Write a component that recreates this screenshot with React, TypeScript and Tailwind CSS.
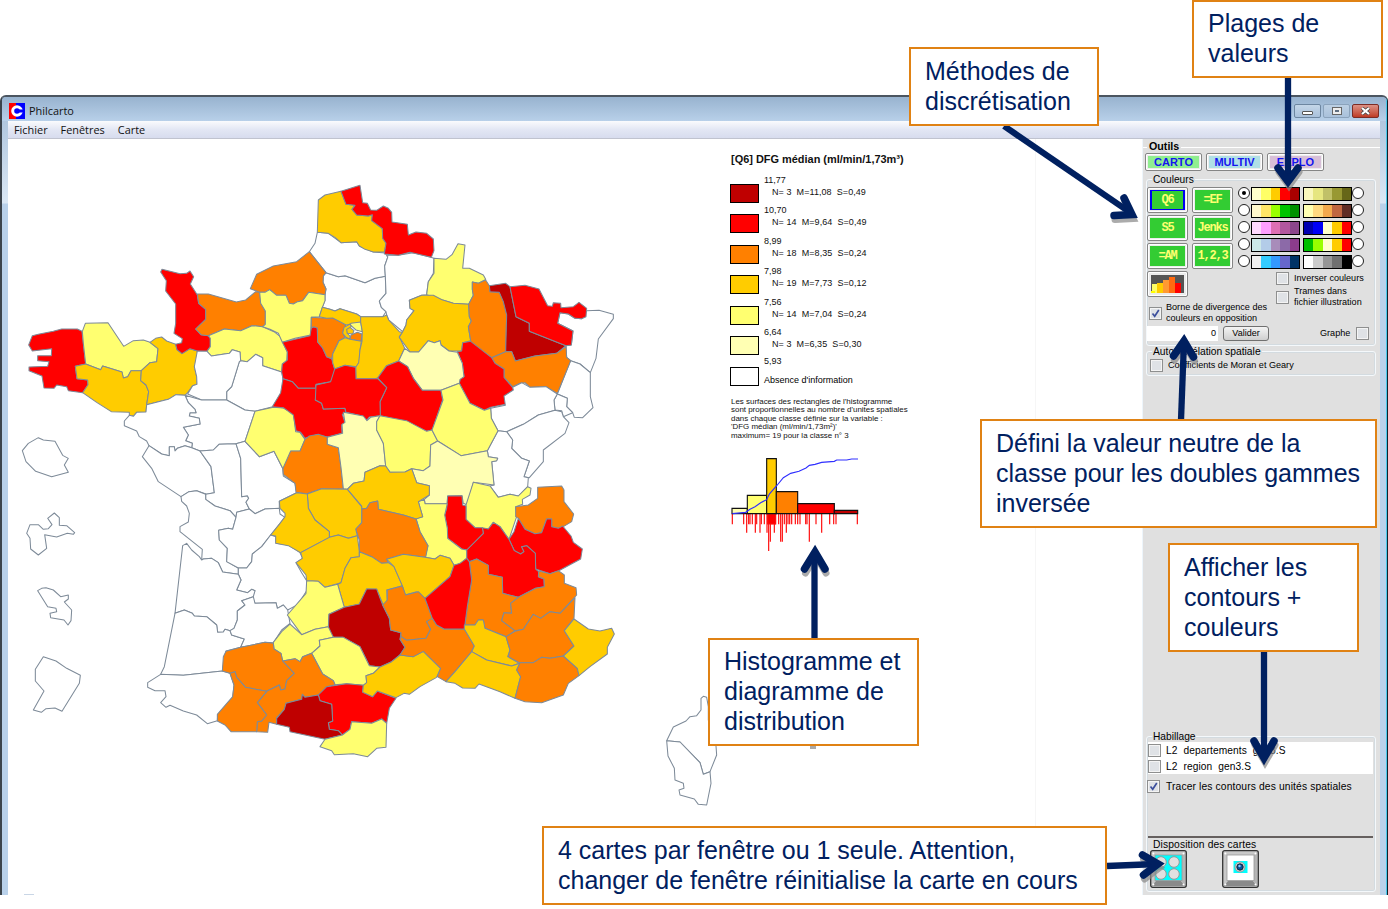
import React from "react";

type Region = [string, string];

const R = "#ff0000";
const K = "#bf0000";
const O = "#ff8000";
const G = "#ffcc00";
const Y = "#ffff70";
const P = "#ffffb3";
const W = "#ffffff";

const northWest: Region[] = [
  [R, "97,737 115,733 160,724 185,717 232,717 246,724 250,760 257,822 226,829 231,866 263,870 264,884 248,908 205,902 200,890 170,885 162,895 132,894 126,858 87,842 87,831 143,829 147,815 113,812 113,797 154,797 155,776 97,783 86,765"],
  [Y, "256,700 324,698 371,769 400,752 430,750 450,757 474,776 470,815 450,818 424,842 393,842 383,860 370,864 366,846 308,828 302,839 257,822 250,760 247,724"],
  [G, "226,829 257,822 302,839 308,828 366,846 370,864 383,860 393,842 424,842 422,872 438,885 446,905 440,944 438,966 410,967 400,979 388,976 388,967 334,965 290,937 248,908 264,884 263,870 231,866"],
  [G, "450,757 467,745 485,741 500,753 527,763 531,779 546,791 570,776 592,783 590,820 583,830 590,860 591,883 578,887 563,908 555,916 528,914 505,928 440,944 446,905 438,885 422,872 424,842 450,818 470,815 474,776"],
  [R, "482,546 486,538 540,551 560,550 570,543 581,560 571,582 592,615 596,640 617,658 617,688 587,717 603,734 625,737 631,745 631,770 621,784 592,783 570,776 546,791 531,779 527,763 545,758 547,746 522,730 527,700 527,642 497,603 499,572"],
  [O, "592,612 625,612 709,636 737,630 767,605 779,606 783,640 796,663 796,703 788,710 756,707 722,722 673,717 625,737 603,734 587,717 617,688 617,658 596,640"],
  [Y, "625,737 673,717 722,722 756,707 788,710 822,725 841,740 850,760 862,787 860,814 847,822 845,846 788,827 788,803 767,793 742,815 722,812 720,786 697,779 688,790 634,798 621,784 631,770 631,745"],
  [W, "722,812 742,815 767,793 788,803 788,827 845,846 849,866 847,905 818,950 765,964 735,960 680,930 680,905 695,890 718,815"],
  [W, "592,783 621,784 634,798 688,790 697,779 720,786 722,812 718,815 695,890 680,905 680,930 605,930 563,912 578,887 591,883 590,860 583,830"],
];

const northEast: Region[] = [
  [W, "258,308 295,320 315,317 375,338 405,325 436,319 438,370 418,393 424,412 438,425 428,440 362,440 350,432 300,416 285,423 270,418 247,412 255,392 255,374 258,357 249,337 250,318"],
  [W, "232,187 265,190 303,218 350,215 358,228 400,246 436,249 443,262 434,288 436,319 405,325 375,338 315,317 295,320 258,308 208,245 225,220"],
  [W, "443,255 475,256 520,248 572,262 582,265 580,310 565,335 560,374 545,376 508,391 510,415 522,422 500,450 498,465 488,485 446,450 440,435 438,425 424,412 418,393 438,370 436,319 434,288 443,262"],
  [O, "31,356 50,313 100,288 170,275 208,245 258,308 250,318 249,337 258,357 255,374 206,367 188,392 173,395 160,402 148,400 138,376 110,376 89,359 75,367 59,367 47,362"],
  [Y, "59,367 75,367 89,359 110,376 138,376 148,400 160,402 173,395 188,392 206,367 255,374 255,392 247,412 238,440 214,442 212,495 165,505 127,517 115,490 90,478 68,470 76,463 76,423 62,400"],
  [R, "214,474 221,470 232,474 233,516 248,534 260,560 275,566 278,578 284,597 282,618 272,635 228,643 226,655 175,655 157,635 129,626 125,606 127,582 142,570 142,545 127,517 165,508 210,497"],
  [O, "214,442 260,445 278,440 300,455 318,465 308,486 315,503 297,512 278,552 275,566 260,560 248,534 233,516 232,474 221,470 214,474"],
  [G, "247,412 270,418 285,423 300,416 350,432 362,440 362,458 332,463 318,465 300,455 278,444 260,445 238,440"],
  [Y, "333,460 362,456 367,485 348,480 330,464"],
  [O, "333,495 352,487 366,492 364,514 330,508"],
  [G, "312,472 330,462 334,470 322,478 322,490 330,498 330,508 318,502 308,490"],
  [G, "320,478 330,472 342,482 338,492 322,490"],
  [G, "297,512 315,503 330,508 364,514 360,540 358,575 350,590 315,586 284,597 278,578 278,552"],
  [G, "362,440 428,440 440,435 446,450 478,485 488,487 478,500 494,535 476,573 440,587 413,624 405,626 348,626 347,592 356,578 360,540 366,514 367,485 362,456"],
  [G, "235,90 255,75 303,64 318,103 345,106 336,118 350,135 385,138 397,134 395,152 427,176 428,205 438,220 433,246 400,246 375,238 358,228 350,215 303,218 285,202 265,190 232,187"],
  [R, "303,64 360,46 368,98 382,100 392,120 410,121 430,108 445,115 455,127 456,156 502,163 505,195 528,186 560,190 580,207 582,242 574,262 545,255 510,247 475,256 433,252 438,220 428,205 427,176 395,152 397,134 385,138 350,135 336,118 345,106 318,103"],
  [Y, "582,265 618,268 636,254 654,221 675,225 668,295 688,295 730,315 737,328 715,340 697,336 697,358 700,376 686,403 640,400 580,382 560,374 565,335 582,310"],
  [G, "508,391 545,376 580,376 606,389 640,400 686,403 688,440 694,453 685,470 692,512 668,518 665,543 627,543 603,525 600,512 583,518 565,512 536,546 510,546 478,502 488,485 498,465 500,450 522,422 510,415"],
  [O, "697,336 715,340 737,330 750,350 750,365 778,367 790,395 800,435 797,545 755,563 692,522 692,512 685,470 694,453 688,440 686,403 700,376 697,358"],
  [K, "748,347 797,340 810,350 828,440 868,460 868,484 978,527 950,550 885,558 826,573 815,545 797,545 800,435 790,395 778,367 750,365"],
  [W, "1040,422 1077,421 1120,433 1120,446 1075,507 1068,565 1051,608 1020,582 992,572 980,562 978,527 994,525 999,483 953,460 960,428 985,432 1005,445 1025,446"],
  [R, "810,350 855,346 897,357 923,407 937,409 940,398 962,400 963,413 1000,410 1017,397 1040,415 1038,440 1025,446 1005,445 985,432 960,428 953,460 999,483 994,525 978,527 868,484 868,460 828,440"],
  [W, "992,572 1020,582 1051,608 1051,680 1059,713 1028,743 1003,742 998,728 980,710 982,685 952,672"],
  [W, "952,672 982,685 980,710 998,728 970,740 965,722 945,720 942,690"],
  [O, "755,563 797,545 815,545 826,573 885,558 950,550 978,530 980,562 992,572 952,670 918,650 870,652 855,638 840,640 818,650 792,622 792,597 765,580"],
  [R, "652,545 665,543 668,518 692,514 755,563 765,580 792,597 792,622 820,655 820,661 795,678 797,703 752,712 733,721 690,700 668,660 658,640 660,628 672,620 667,580"],
  [P, "494,535 510,546 536,546 565,512 583,518 600,512 603,525 627,543 652,547 667,580 672,620 660,628 658,640 603,661 547,661 520,625 503,590 476,573"],
  [R, "413,624 440,587 476,573 503,590 520,625 547,661 603,661 608,690 577,780 560,784 500,755 421,737 420,695 440,653"],
  [R, "129,626 157,635 175,655 230,655 226,690 245,700 250,717 315,715 317,728 307,733 315,758 305,765 306,790 262,801 230,794 195,805 182,787 168,782 160,735 130,713 97,710 122,668"],
  [R, "228,645 272,635 284,597 315,586 347,592 348,626 413,626 440,653 420,695 421,737 388,741 379,752 367,738 318,727 315,715 250,717 245,700 226,690"],
];

const west: Region[] = [
  [W, "555,-14 605,0 680,0 735,30 765,34 735,124 708,131 657,133 640,150 600,153 575,143 577,130 557,122 565,105 550,82 600,72 598,55 568,48 570,38 588,38 585,28 565,8"],
  [W, "388,46 400,49 410,37 438,36 440,14 505,-2 528,-16 555,-14 565,8 585,28 588,38 570,38 568,48 598,55 600,72 550,82 565,105 557,122 577,130 575,143 555,137 532,145 525,153 523,140 508,140 508,167 485,162 447,137 440,123 418,110 410,93 373,77 373,63"],
  [W, "447,137 485,162 508,167 508,140 523,140 525,153 532,145 555,137 575,143 600,153 633,200 643,278 620,283 590,272 567,275 543,290 475,245 455,205 427,170"],
  [W, "600,153 640,150 657,133 708,131 722,175 725,290 742,287 746,295 738,307 748,327 710,337 708,352 690,332 645,318 617,298 617,283 643,278 633,200"],
  [W, "708,131 735,124 778,170 822,154 848,205 850,228 885,250 890,278 838,304 838,325 795,327 765,341 748,327 738,307 746,295 742,287 725,290 722,175"],
  [W, "543,290 567,275 590,272 617,283 617,298 645,318 690,332 708,352 698,388 685,385 656,391 658,420 682,445 680,485 715,504 715,523 668,516 655,488 635,475 610,477 605,480 607,448 540,395 540,380 565,366 568,340 560,318 545,304"],
  [W, "708,352 710,337 748,327 765,341 795,327 838,325 840,342 855,352 812,405 785,440 757,462 755,485 740,504 715,504 680,485 682,445 658,420 656,391 685,385 698,388"],
  [W, "812,405 828,410 828,430 865,435 900,458 908,475 888,488 905,518 920,542 920,572 893,614 863,630 850,615 832,625 828,608 765,610 757,592 765,572 755,568 743,578 710,570 723,540 715,523 715,504 740,504 755,485 757,462 785,440"],
  [W, "548,437 560,430 575,450 598,470 605,480 610,477 635,475 655,488 668,516 715,523 723,540 710,570 743,578 755,568 765,572 760,590 725,602 735,615 712,633 712,660 702,685 690,692 675,688 670,696 653,697 650,675 620,650 583,648 577,640 553,630 525,640"],
  [W, "525,640 553,630 577,640 583,648 620,650 650,675 653,697 670,696 675,688 690,692 695,705 733,717 722,742 678,753 667,813 550,826 482,823 493,800"],
  [W, "760,590 765,610 828,608 832,625 850,615 863,630 870,670 845,690 820,728 795,727 722,742 733,717 695,705 690,692 702,685 712,660 712,633 735,615 725,602"],
  [W, "482,823 550,826 667,813 690,820 702,855 698,893 653,945 652,962 622,971 590,945 550,933 510,916 498,922 482,908 498,890 495,872 465,872 443,862 443,848"],
  [Y, "765,34 820,22 850,24 880,40 887,95 900,97 915,118 900,154 872,154 864,205 848,205 822,154 778,170 735,124"],
  [W, "67,152 85,130 115,113 130,120 165,124 188,166 205,175 193,195 205,217 155,230 107,214 78,185"],
  [W, "80,400 90,374 115,374 130,388 145,386 156,374 143,355 163,339 178,353 178,376 200,377 224,398 220,403 202,400 170,411 134,404 140,445 115,465 92,447 90,415"],
  [W, "113,572 125,565 138,563 160,570 182,590 205,585 205,597 193,606 215,630 213,662 204,675 192,660 152,653 150,640 170,635 168,625 143,620"],
  [W, "130,770 168,783 200,805 241,826 238,850 186,934 165,924 138,926 124,937 100,930 132,873 106,843 106,808"],
];

const centre: Region[] = [
  [W, "662,85 706,76 702,48 730,30 728,22 755,8 780,22 828,20 862,42 852,60 855,91 805,105 760,133 710,155 684,152 664,115"],
  [W, "710,155 760,133 805,105 855,91 875,95 880,110 897,128 885,160 820,210 820,245 778,293 762,290 778,243 755,235 725,205 728,180"],
  [W, "684,152 710,155 728,180 725,205 755,235 778,243 762,290 775,293 773,320 745,348 720,343 685,352 660,318 672,315 665,245 680,242 683,235 655,230 652,212"],
  [O, "39,265 62,213 90,213 105,178 118,168 145,163 172,172 172,193 205,203 213,262 220,326 190,328 155,326 110,341 78,337 75,310 40,283"],
  [P, "172,172 218,160 216,133 225,127 220,97 280,108 291,122 302,112 330,107 320,125 320,150 340,190 347,258 330,257 285,277 282,303 250,310 232,328 220,326 213,262 205,203 172,193"],
  [Y, "330,107 410,122 470,154 486,150 503,183 482,195 480,258 460,272 425,266 405,276 360,277 347,258 340,190 320,150 320,125"],
  [Y, "513,31 568,10 600,70 643,91 662,85 664,115 684,152 652,212 573,227 503,183 486,150 519,60"],
  [P, "503,183 573,227 652,212 655,230 683,235 680,242 665,245 672,315 610,307 592,375 580,370 576,347 533,348 532,371 465,371 463,358 478,345 478,317 440,308 425,266 460,272 480,258 482,195"],
  [Y, "610,307 660,318 685,352 720,343 745,348 773,320 783,325 780,345 757,358 758,373 737,380 740,410 717,478 705,462 690,440 670,427 655,447 615,443 588,418 588,375"],
  [O, "803,322 875,318 882,330 882,365 911,402 905,425 880,440 865,445 845,440 845,417 830,417 815,458 795,461 765,448 745,415 737,410 737,380 775,375 803,355"],
  [R, "745,415 765,448 795,461 815,458 830,417 845,417 845,440 865,445 878,438 903,468 910,487 937,507 932,537 865,573 840,581 797,567 796,520 770,497 755,500 762,515 752,522 733,512 717,478 732,455"],
  [R, "590,510 640,460 637,443 655,447 670,427 690,440 717,478 733,512 752,522 762,515 755,500 770,497 796,520 797,567 806,575 805,590 822,597 823,620 797,625 745,652 698,640 697,592 655,583 655,556 620,537 598,545 590,535"],
  [R, "533,348 576,347 578,375 588,378 588,418 615,443 637,443 640,460 590,510 575,507 533,475 532,445 524,405 530,385"],
  [Y, "465,371 532,371 524,405 532,445 533,475 575,507 590,510 590,535 570,552 552,556 540,535 510,526 495,537 465,532 474,497 450,455 438,415 458,410 445,365 463,358"],
  [G, "232,328 250,310 282,303 285,277 330,257 347,258 360,277 405,276 425,266 440,308 478,317 478,345 445,365 458,410 438,417 400,405 325,388 323,363 300,368 290,385 275,387 275,378"],
  [O, "275,387 290,385 300,368 323,363 325,388 400,405 438,417 450,455 474,497 467,532 400,523 350,538 355,548 335,550 305,530 268,515 268,480 257,447 275,428"],
  [G, "112,342 155,326 232,328 275,380 275,428 257,447 262,467 235,475 205,465 178,472 178,455 135,420 115,385"],
  [G, "28,364 80,338 112,342 115,385 135,420 178,455 178,472 92,518 55,497 17,490 17,468 2,465 30,430 45,410 45,400 30,385"],
  [G, "92,518 178,472 205,465 235,475 262,467 268,515 268,530 243,533 225,565 213,608 165,622 145,604 110,602 108,585 78,548 97,535"],
  [G, "268,515 305,530 335,550 355,548 372,560 397,617 350,630 352,668 340,675 320,628 290,627 268,673 223,682 203,613 213,608 225,565 243,533 268,530"],
  [G, "350,538 400,523 465,532 495,537 510,526 540,535 552,556 540,590 465,655 440,635 405,645 397,617 372,560"],
];

const south: Region[] = [
  [Y, "320,62 355,64 375,82 413,73 433,142 387,163 385,200 345,208 305,224 262,165 318,100"],
  [K, "387,163 433,142 478,132 500,87 530,87 548,135 568,175 572,210 603,218 600,238 615,262 600,285 575,305 540,321 508,317 480,260 430,232 400,232 385,210"],
  [Y, "220,247 245,215 270,192 305,224 345,208 385,200 400,232 358,241 360,258 335,280 308,290 300,305 285,296 248,303 243,280 222,267"],
  [Y, "335,280 360,258 358,241 400,232 430,232 480,260 508,317 540,321 520,340 498,347 500,368 490,376 440,371 405,374 400,362 368,342"],
  [O, "67,333 70,290 78,274 122,262 195,247 220,250 222,267 243,280 248,303 283,340 260,362 255,387 242,390 238,375 200,394 137,382 110,352 105,335 90,340"],
  [O, "248,303 285,296 300,305 308,290 335,280 368,342 400,362 405,374 380,380 355,405 315,412 307,403 305,418 258,430 253,448 230,473 230,493 207,487 203,517 170,515 172,485 185,483 200,465 172,428 200,394 238,375 242,390 255,387 260,362 283,340"],
  [O, "90,340 105,335 110,352 137,382 200,394 172,428 200,465 185,483 172,485 170,515 93,515 75,495 52,483 52,463 98,410 102,375"],
  [R, "355,405 380,380 440,371 490,376 488,395 518,410 532,393 588,415 568,445 560,490 545,477 515,490 455,485 450,508 427,525 415,512 388,508 385,488 398,483 395,433 360,422"],
  [K, "230,475 253,448 258,430 305,418 307,403 315,412 355,405 360,422 395,433 398,483 385,488 388,508 415,512 427,525 375,538 270,515 268,502 230,493"],
  [Y, "375,538 427,525 450,508 455,485 515,490 545,477 560,490 558,562 530,565 503,590 460,581 403,584 395,572 360,560"],
  [G, "490,376 500,368 498,347 520,340 540,321 575,305 600,285 640,290 670,274 722,325 710,352 660,380 628,403 612,400 588,413 532,393 518,410 488,397"],
  [O, "548,135 562,120 562,90 607,78 617,105 655,95 675,115 697,175 680,185 692,208 678,235 620,241 603,230 603,218 572,210 568,175"],
  [O, "697,175 710,195 732,207 793,207 823,258 812,280 765,335 738,365 712,350 722,325 670,274 640,290 600,285 615,262 600,238 603,230 620,241 678,235 692,208 680,185"],
  [O, "808,5 830,-3 865,16 865,43 907,52 908,100 955,112 932,130 935,160 912,158 905,182 945,212 920,230 855,205 850,180 835,180 825,195 795,195 802,140 815,60"],
  [R, "675,115 750,50 762,16 780,10 800,-5 808,5 815,60 802,140 793,207 732,207 710,195 697,175"],
  [G, "793,195 825,195 835,180 850,180 855,205 918,230 930,270 923,290 958,310 935,318 860,300 815,275 823,258 793,207"],
  [G, "815,275 860,300 935,318 960,310 950,330 962,350 945,415 900,395 837,372 825,385 788,384 765,370 738,365 765,335"],
  [O, "955,112 1007,85 1033,80 1032,57 1016,50 1016,33 1050,41 1075,32 1093,45 1093,70 1128,83 1130,105 1080,160 1050,155 1022,175 1000,163 970,208 945,212 905,182 912,158 935,160 932,130"],
  [O, "945,214 970,208 1000,163 1022,175 1050,155 1080,160 1125,113 1122,175 1093,212 1122,258 1090,288 1050,295 1025,292 1000,308 958,308 925,290 930,270 918,230"],
  [O, "960,308 1000,308 1025,292 1050,295 1090,288 1132,325 1137,347 1105,370 1090,405 1025,428 975,425 945,415 962,350 950,330"],
  [G, "1122,177 1165,207 1200,213 1235,205 1243,222 1222,262 1222,282 1170,320 1137,347 1132,325 1090,288 1122,258 1093,212"],
];

const corsica: Region[] = [
  [W, "80,362 100,321 138,303 150,290 170,287 183,270 183,235 190,229 200,232 205,260 205,300 228,378 230,405 210,455 190,463 180,428 120,366"],
  [W, "80,362 120,366 180,428 190,463 210,455 213,490 200,555 175,553 163,537 120,525 117,510 132,505 130,490 105,480 103,445 84,408"],
];

const sheets: { at: string; regions: Region[] }[] = [
  { at: "translate(0 90) scale(.33333)", regions: northWest },
  { at: "translate(0 400) scale(.33333)", regions: west },
  { at: "translate(240 170) scale(.33333)", regions: northEast },
  { at: "translate(270 380) scale(.33333)", regions: centre },
  { at: "translate(200 560) scale(.33333)", regions: south },
  { at: "translate(640 620) scale(.33333)", regions: corsica },
];

function FranceMap() {
  return (
    <svg className="h-[756px] w-[722px] shrink-0" viewBox="8 139 722 756">
      {sheets.map((s) => (
        <g key={s.at} transform={s.at} stroke="#7d8a98" strokeWidth="3.1" strokeLinejoin="round">
          {s.regions.map(([fill, pts], i) => (
            <polygon key={i} fill={fill} points={pts} />
          ))}
        </g>
      ))}
      <path d="M24 894.5h10" stroke="#c9d6e6" />
    </svg>
  );
}

const classes = [
  { swatch: "bg-[#bf0000]", top: "11,77", stats: "N= 3  M=11,08  S=0,49" },
  { swatch: "bg-[#ff0000]", top: "10,70", stats: "N= 14  M=9,64  S=0,49" },
  { swatch: "bg-[#ff8000]", top: "8,99", stats: "N= 18  M=8,35  S=0,24" },
  { swatch: "bg-[#ffcc00]", top: "7,98", stats: "N= 19  M=7,73  S=0,12" },
  { swatch: "bg-[#ffff70]", top: "7,56", stats: "N= 14  M=7,04  S=0,24" },
  { swatch: "bg-[#ffffb3]", top: "6,64", stats: "N= 3  M=6,35  S=0,30" },
];

const ticks: [number, number][] = [
  [97, 433], [131, 433], [140, 458], [146, 433], [150, 433], [157, 433], [166, 458], [170, 433], [180, 458], [184, 433], [193, 433],
  [201, 458], [206, 513], [211, 485], [215, 433], [219, 433], [223, 458], [226, 433], [236, 433], [242, 485], [247, 485], [253, 433],
  [259, 458], [264, 433], [269, 433], [275, 433], [286, 433], [293, 433], [300, 433], [317, 433], [321, 433], [328, 485], [348, 433],
  [365, 458], [389, 433], [401, 433], [408, 433], [472, 433],
];

function Histogram() {
  return (
    <svg className="h-[100px] w-[140px]" viewBox="84 225 420 300">
      <g stroke="#ff1010" strokeWidth="3.6">
        {ticks.map(([x, y]) => (
          <path key={x} d={`M${x} 402V${y}`} />
        ))}
        <path d="M203 402h24v30h-24z" fill="#f00" />
      </g>
      <g stroke="#111" strokeWidth="3.4">
        <path d="M96 385h46v16H96z" fill="#ffffb3" />
        <path d="M142 346h58v55h-58z" fill="#ffff70" />
        <path d="M200 236h29v165h-29z" fill="#ffcc00" />
        <path d="M229 335h64v66h-64z" fill="#ff8000" />
        <path d="M293 371h110v30H293z" fill="#f00" />
        <path d="M403 391h70v10h-70z" fill="#bf0000" />
      </g>
      <path
        d="M97 401L137 397 150 388 165 380 182 368 200 359 208 342 232 315 250 293 272 280 297 274 318 264 328 256 345 253 365 247 403 244 410 240 440 240 455 237 474 237"
        fill="none"
        stroke="#3030ff"
        strokeWidth="3.4"
      />
    </svg>
  );
}

function Legend() {
  return (
    <div className="flex w-[230px] flex-col text-[9px] text-[#111]">
      <div className="mt-[13px] ml-px h-[14px] whitespace-nowrap text-[10.950px] leading-[14px] font-bold">[Q6] DFG médian (ml/min/1,73m³)</div>
      <div className="mt-[9px] flex flex-col">
        {classes.map((c) => (
          <div key={c.top} className="flex h-[30.45px]">
            <div className={`mt-[9px] h-[19px] w-[29px] border border-black ${c.swatch}`} />
            <div className="ml-[5px] flex flex-col whitespace-pre leading-[11px]">
              <span className="h-[12px]">{c.top}</span>
              <span className="pl-[8px] tracking-[0.06px]">{c.stats}</span>
            </div>
          </div>
        ))}
        <div className="flex h-[31px]">
          <div className="mt-[9px] h-[19px] w-[29px] border border-black bg-white" />
          <div className="ml-[5px] flex flex-col leading-[11px]">
            <span className="h-[17px] leading-[7px]">5,93</span>
            <span className="text-black">Absence d'information</span>
          </div>
        </div>
      </div>
      <div className="mt-[9px] ml-px h-[44px] whitespace-pre text-[7.95px] leading-[8.5px]">
        {"Les surfaces des rectangles de l'histogramme\nsont proportionnelles au nombre d'unites spatiales\ndans chaque classe définie sur la variable :\n'DFG médian (ml/min/1,73m²)'\nmaximum= 19 pour la classe n° 3"}
      </div>
      <div className="mt-[13px] -ml-[2px]">
        <Histogram />
      </div>
    </div>
  );
}

function Check({ on = false }: { on?: boolean }) {
  return (
    <span className="flex size-[13px] shrink-0 items-center justify-center border border-[#8e8f8f] bg-[#f4f4f4] p-px">
      <svg viewBox="0 0 9 9" className="size-[9px] bg-[#dfe2e6]">
        {on && <path d="M1.5 4.5L3.7 7.2 7.8 1" fill="none" stroke="#3c4f9c" strokeWidth="1.7" />}
      </svg>
    </span>
  );
}

function Ramp({ colors }: { colors: string[] }) {
  return (
    <span className="flex h-[14px] w-[49px] border border-black">
      {colors.map((c) => (
        <span key={c} className={`flex-1 ${c}`} />
      ))}
    </span>
  );
}

function Radio({ on = false }: { on?: boolean }) {
  return (
    <span className="flex size-[12px] items-center justify-center rounded-full border border-[#222] bg-white">
      {on && <span className="size-[4px] rounded-full bg-black" />}
    </span>
  );
}

const ramps: [string[], string[]][] = [
  [["bg-[#ffffcc]", "bg-[#ffff66]", "bg-[#ffcc00]", "bg-[#ff0000]", "bg-[#aa0000]"], ["bg-[#f9f7bc]", "bg-[#e6e680]", "bg-[#c0c068]", "bg-[#989833]", "bg-[#666618]"]],
  [["bg-[#fff8cc]", "bg-[#ffe566]", "bg-[#99ff00]", "bg-[#00c400]", "bg-[#009000]"], ["bg-[#ffffb3]", "bg-[#ffd980]", "bg-[#f2a84d]", "bg-[#c06640]", "bg-[#602c24]"]],
  [["bg-[#ffd9ff]", "bg-[#ff9fff]", "bg-[#dd6fb3]", "bg-[#b3579f]", "bg-[#8c468c]"], ["bg-[#0000b0]", "bg-[#0000f5]", "bg-[#ffffcc]", "bg-[#ffcc00]", "bg-[#ff0000]"]],
  [["bg-[#cce8e8]", "bg-[#b3cce8]", "bg-[#a88cba]", "bg-[#8c6aa8]", "bg-[#8c3c8c]"], ["bg-[#00bf00]", "bg-[#99ff00]", "bg-[#ffffcc]", "bg-[#ffcc00]", "bg-[#ff0000]"]],
  [["bg-[#f0f0f0]", "bg-[#33ccff]", "bg-[#3399ff]", "bg-[#6666cc]", "bg-[#003366]"], ["bg-[#ffffff]", "bg-[#cccccc]", "bg-[#969696]", "bg-[#707070]", "bg-[#000000]"]],
];

const frame = "rounded-[3px] border border-[#f4f8fb] shadow-[inset_0_0_0_1px_#d3dbe0]";
const bevel = "rounded-[2px] border border-[#858585] bg-[#ececec] shadow-[inset_0_0_0_1px_#ffffff]";

function Method({ label, active = false }: { label: string; active?: boolean }) {
  return (
    <button className={`flex h-[26px] w-[41px] p-[2px] ${bevel}`}>
      <span
        className={`flex flex-1 items-center justify-center bg-[#33cc33] font-['Liberation_Mono',monospace] text-[12px] leading-none font-bold tracking-[-1.2px] whitespace-pre text-[#ffff70] ${
          active ? "border-x-2 border-y border-[#0000f0]" : ""
        }`}
      >
        {label}
      </span>
    </button>
  );
}

function GridButton({ four = false }: { four?: boolean }) {
  return (
    <svg className="h-[38px] w-[37px]" viewBox="0 0 37 38">
      <rect x=".7" y=".7" width="35.6" height="36.6" rx="2" fill="#c8c8c8" stroke="#333" strokeWidth="1.3" />
      <path d="M2 36L6 31H31L35 36Z" fill="#8a8a8a" />
      <path d="M35 2L31 6V31L35 36Z" fill="#b5b5b5" />
      <rect x="5" y="5" width="27" height="25.500" fill={four ? "#00ffff" : "#fff"} stroke="#999" strokeWidth=".8" />
      <circle cx="3.400" cy="3.400" r="1" fill="#fff" />
      <circle cx="33.500" cy="3.400" r="1" fill="#fff" />
      <circle cx="3.400" cy="34.500" r="1" fill="#fff" />
      <circle cx="33.500" cy="34.500" r="1" fill="#fff" />
      {four ? (
        <g fill="#e0e0e0" stroke="#8f9a9a">
          <circle cx="11" cy="12" r="5.300" />
          <circle cx="24" cy="12" r="5.300" />
          <circle cx="11" cy="24" r="5.300" />
          <circle cx="24" cy="24" r="5.300" />
        </g>
      ) : (
        <g>
          <path d="M11.500 11h14v12h-14z" fill="#00ffff" />
          <circle cx="18" cy="17" r="5" fill="#ddd" stroke="#999" />
          <circle cx="18" cy="17" r="3.200" fill="#07509a" stroke="#123" />
          <circle cx="17.500" cy="16" r="1.200" fill="#8cf" />
        </g>
      )}
    </svg>
  );
}

function Tools() {
  return (
    <aside className="flex w-[238px] shrink-0 flex-col border-l border-[#edf5fb] bg-[#e0e0e0] text-[9.1px] leading-[11px] text-black">
      <div className="flex h-[14px] items-start pt-[2px]">
        <span className="mt-[6px] h-px w-[4px] bg-white" />
        <span className="mx-[2px] text-[10.700px] leading-[11px] font-bold">Outils</span>
        <span className="mt-[6px] h-px flex-1 bg-white" />
      </div>
      <div className="ml-[2px] flex h-[18px] gap-[4px] text-[11px] font-bold text-[#1414f0]">
        <button className={`w-[57px] p-[2px] ${bevel}`}><span className="flex h-full items-center justify-center bg-[#90ee90]">CARTO</span></button>
        <button className={`w-[57px] p-[2px] ${bevel}`}><span className="flex h-full items-center justify-center bg-[#b0e0e6]">MULTIV</span></button>
        <button className={`w-[57px] p-[2px] ${bevel}`}><span className="flex h-full items-center justify-center bg-[#d8bfd8]">EXPLO</span></button>
      </div>

      <fieldset className={`mt-[3px] ml-[3px] flex h-[172px] w-[230px] flex-col ${frame}`}>
        <legend className="ml-[5px] h-[11px] px-[1px] text-[10.200px]">Couleurs</legend>
        <div className="mt-[2px] flex">
          <div className="grid h-[83px] grid-cols-[41px_41px] content-start gap-x-[4px] gap-y-[2px]">
            <Method label="Q6" active />
            <Method label="=EF" />
            <Method label="S5" />
            <Method label="Jenks" />
            <Method label="=AM" />
            <Method label="1,2,3" />
          </div>
          <div className="ml-[4.500px] flex flex-col">
            {ramps.map(([a, b], i) => (
              <div key={i} className="flex h-[17px] items-start">
                <Radio on={i === 0} />
                <span className="ml-[1.500px]"><Ramp colors={a} /></span>
                <span className="ml-[3px]"><Ramp colors={b} /></span>
                <Radio />
              </div>
            ))}
          </div>
        </div>
        <div className="-mt-px flex h-[54px]">
          <div className="flex w-[129px] flex-col">
            <button className={`flex h-[26px] w-[41px] p-[3px] ${bevel}`}>
              <svg className="h-full w-full" viewBox="0 0 33 18" preserveAspectRatio="none">
                <path d="M0 0h33v18H0z" fill="#555" />
                <path d="M1 9h5v9H1z" fill="#ff6" />
                <path d="M6 8h6v10H6z" fill="#ffcc00" />
                <path d="M12 5h6v13h-6z" fill="#ff9933" />
                <path d="M18 2h6v16h-6z" fill="#ff6a10" />
                <path d="M24 8h6v10h-6z" fill="#f00" />
                <path d="M0 16h4v2H0z" fill="#ff0" />
              </svg>
            </button>
            <div className="mt-[5px] ml-[2px] flex items-center gap-[4px]">
              <Check on />
              <span className="leading-[11px] whitespace-nowrap">Borne de divergence des<br />couleurs en opposition</span>
            </div>
          </div>
          <div className="mt-px flex flex-col gap-px whitespace-nowrap">
            <div className="flex items-center gap-[5px]"><Check />Inverser couleurs</div>
            <div className="flex items-center gap-[5px]"><Check /><span>Trames dans<br />fichier illustration</span></div>
          </div>
        </div>
        <div className="mt-px flex h-[15px] items-center">
          <span className="h-[15px] w-[71px] bg-white pr-[2px] text-right leading-[15px]">0</span>
          <button className="ml-[5px] h-[15px] w-[46px] rounded-[3px] border border-[#707070] bg-linear-to-b from-[#f4f4f4] to-[#cfcfcf] text-[9px] leading-[13px]">Valider</button>
          <span className="mr-[6px] ml-[51px]">Graphe</span>
          <Check />
        </div>
      </fieldset>

      <fieldset className={`ml-[3px] h-[30px] w-[230px] ${frame}`}>
        <legend className="ml-[5px] h-[11px] px-[1px] text-[10.300px]">Autocorrélation spatiale</legend>
        <div className="mt-[2px] ml-[3px] flex items-center gap-[5px]"><Check />Coefficients de Moran et Geary</div>
      </fieldset>

      <fieldset className={`mt-auto mb-[3px] ml-[3px] flex h-[161px] w-[230px] flex-col text-[10.200px] ${frame}`}>
        <legend className="ml-[5px] h-[11px] px-[1px]">Habillage</legend>
        <div className="ml-px flex h-[32px] w-[225px] flex-col justify-center gap-[2px] bg-white whitespace-pre">
          <div className="flex h-[14px] items-center gap-[5px] tracking-[0.1px]"><Check />L2  departements  gen3.S</div>
          <div className="flex h-[14px] items-center gap-[5px] tracking-[0.1px]"><Check />L2  region  gen3.S</div>
        </div>
        <div className="mt-[6px] flex items-center gap-[6px] text-[10.300px] tracking-[0.120px] whitespace-nowrap"><Check on />Tracer les contours des unités spatiales</div>
        <div className="mt-[43px] ml-px h-[2px] w-[225px] bg-[#66605f]" />
        <div className="ml-[6px] h-[12px] text-[10.300px] leading-[13px] tracking-[0.120px]">Disposition des cartes</div>
        <div className="ml-[3px] flex gap-[35px]">
          <GridButton four />
          <GridButton />
        </div>
      </fieldset>
    </aside>
  );
}

function AppWindow() {
  return (
    <div className="flex h-[800px] w-full flex-col overflow-hidden rounded-t-[6px] border-t-2 border-r border-l-2 border-t-[#4b5560] border-r-[#10202a] border-l-[#3c444c] bg-[linear-gradient(180deg,#a4bdd8_0px,#dbe8f5_106px,#b9d1ea_107px)]">
      <header className="flex h-[24px] shrink-0 items-center border-r border-[#49c8ea] bg-linear-to-b from-[#98b3cf] to-[#b8d0e9] pr-[7px] pl-[7px]">
        <svg className="mt-[4px] size-[16px]" viewBox="0 0 16 16">
          <path d="M0 0h16v16H0z" fill="#f00" />
          <path d="M7 0h9v16H7z" fill="#00f" />
          <circle cx="8" cy="8" r="4.300" fill="#00f" stroke="#fff" strokeWidth="3" />
          <path d="M9 6.500h7v3H9z" fill="#00f" />
        </svg>
        <span className="mt-[5px] ml-[4px] font-['Open_Sans',sans-serif] text-[10.900px] text-[#111]">Philcarto</span>
        <div className="mt-[4px] ml-auto flex gap-[2px]">
          <span className="flex h-[14px] w-[27px] items-center justify-center rounded-[2px] border border-[#6d86a0] bg-linear-to-b from-[#c4d6e8] to-[#a9c1db]">
            <span className="mt-[3px] h-[4px] w-[11px] rounded-[1px] border border-[#555] bg-white" />
          </span>
          <span className="flex h-[14px] w-[27px] items-center justify-center rounded-[2px] border border-[#8ba3bc] bg-linear-to-b from-[#bcd0e4] to-[#a9c1db]">
            <span className="h-[6px] w-[8px] border-2 border-[#ededed] bg-[#606f80] outline outline-[#666]" />
          </span>
          <span className="flex h-[14px] w-[27px] items-center justify-center rounded-[2px] border border-[#7c2c25] bg-linear-to-b from-[#dc9185] to-[#be3a24]">
            <svg className="h-[8px] w-[11px]" viewBox="0 0 11 8">
              <path d="M2 1l7 6M9 1L2 7" stroke="#444" strokeWidth="3.600" />
              <path d="M2 1l7 6M9 1L2 7" stroke="#fff" strokeWidth="2.200" />
            </svg>
          </span>
        </div>
      </header>
      <div className="flex min-h-0 flex-1 flex-col border-r border-[#49c8ea] pr-[6px] pl-[6px]">
        <nav className="flex h-[18px] shrink-0 items-center gap-[13px] border-b border-[#c0c3cf] bg-linear-to-b from-[#fafbfd] via-[#e3e7f4] to-[#d7dcee] pt-px pl-[6px] font-['Open_Sans',sans-serif] text-[10.900px] text-[#111]">
          <span>Fichier</span>
          <span>Fenêtres</span>
          <span>Carte</span>
        </nav>
        <main className="flex min-h-0 flex-1 bg-white">
          <FranceMap />
          <Legend />
          <div className="mb-[43px] w-[76px] border-r border-[#f6f6f6]" />
          <div className="flex-1" />
          <Tools />
        </main>
      </div>
    </div>
  );
}

const callout = "absolute border-2 border-[#e08214] bg-white text-[25px] leading-[30px] whitespace-pre text-[#002060]";

function Arrow({ d, head }: { d: string; head: string }) {
  return (
    <g fill="none">
      <path d={head} transform="translate(1 4)" stroke="#888" strokeOpacity=".7" strokeWidth="7" strokeLinecap="round" strokeLinejoin="miter" />
      <path d={d} stroke="#002060" strokeWidth="6.300" />
      <path d={head} stroke="#002060" strokeWidth="7.500" strokeLinecap="round" strokeLinejoin="miter" />
    </g>
  );
}

export default function App() {
  return (
    <div className="relative h-[909px] w-[1388px] overflow-hidden bg-white pt-[95px] font-['Liberation_Sans',Arial,sans-serif]">
      <AppWindow />
      <svg className="pointer-events-none absolute inset-0 size-full" viewBox="0 0 1388 909">
        <path d="M810 746h6v3h-6z" fill="#aaa" />
        <Arrow d="M1004 126L1131 213" head="M1114 215.500L1132 214.500 1124 198" />
        <Arrow d="M1288 78V182" head="M1278 168L1288 181.500 1298 168" />
        <Arrow d="M1181 420L1184 341" head="M1173.500 356L1184 341 1193.500 357" />
        <Arrow d="M814.500 638V553" head="M804.500 569L815 552 825 569" />
        <Arrow d="M1264 651V758" head="M1254 741L1264 758 1274 741" />
        <Arrow d="M1107 866L1157 864" head="M1142.500 855L1158 864 1143.500 875" />
      </svg>
      <div className={`${callout} top-0 left-[1192px] h-[78px] w-[191px] pt-[6px] pl-[14px]`}>{"Plages de\nvaleurs"}</div>
      <div className={`${callout} top-[47px] left-[909px] h-[79px] w-[190px] pt-[7px] pl-[14px]`}>{"Méthodes de\ndiscrétisation"}</div>
      <div className={`${callout} top-[419px] left-[980px] h-[109px] w-[397px] pt-[7px] pl-[14px]`}>{"Défini la valeur neutre de la\nclasse pour les doubles gammes\ninversée"}</div>
      <div className={`${callout} top-[543px] left-[1168px] h-[109px] w-[191px] pt-[7px] pl-[14px]`}>{"Afficher les\ncontours +\ncouleurs"}</div>
      <div className={`${callout} top-[638px] left-[708px] h-[108px] w-[211px] pt-[6px] pl-[14px]`}>{"Histogramme et\ndiagramme de\ndistribution"}</div>
      <div className={`${callout} top-[826px] left-[542px] h-[79px] w-[565px] pt-[7px] pl-[14px]`}>{"4 cartes par fenêtre ou 1 seule. Attention,\nchanger de fenêtre réinitialise la carte en cours"}</div>
    </div>
  );
}
